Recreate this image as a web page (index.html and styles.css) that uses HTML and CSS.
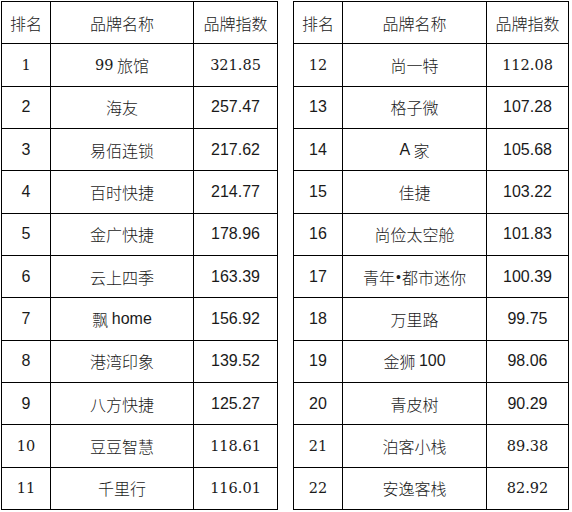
FILE: index.html
```html
<!DOCTYPE html>
<html lang="zh">
<head>
<meta charset="utf-8">
<link rel="stylesheet" href="styles.css">
</head>
<body>
<div class="page">
  <div class="tbl left">
    <div class="c h">排名</div><div class="c h">品牌名称</div><div class="c h">品牌指数</div>
    <div class="c s">1</div><div class="c"><span class="s">99</span> 旅馆</div><div class="c s">321.85</div>
    <div class="c n">2</div><div class="c">海友</div><div class="c n">257.47</div>
    <div class="c n">3</div><div class="c">易佰连锁</div><div class="c n">217.62</div>
    <div class="c n">4</div><div class="c">百时快捷</div><div class="c n">214.77</div>
    <div class="c n">5</div><div class="c">金广快捷</div><div class="c n">178.96</div>
    <div class="c n">6</div><div class="c">云上四季</div><div class="c n">163.39</div>
    <div class="c n">7</div><div class="c">飘 <span class="n">home</span></div><div class="c n">156.92</div>
    <div class="c n">8</div><div class="c">港湾印象</div><div class="c n">139.52</div>
    <div class="c n">9</div><div class="c">八方快捷</div><div class="c n">125.27</div>
    <div class="c s">10</div><div class="c">豆豆智慧</div><div class="c s">118.61</div>
    <div class="c s">11</div><div class="c">千里行</div><div class="c s">116.01</div>
  </div>
  <div class="tbl right">
    <div class="c h">排名</div><div class="c h">品牌名称</div><div class="c h">品牌指数</div>
    <div class="c s">12</div><div class="c">尚一特</div><div class="c s">112.08</div>
    <div class="c n">13</div><div class="c">格子微</div><div class="c n">107.28</div>
    <div class="c n">14</div><div class="c"><span class="n">A</span> 家</div><div class="c n">105.68</div>
    <div class="c n">15</div><div class="c">佳捷</div><div class="c n">103.22</div>
    <div class="c n">16</div><div class="c">尚俭太空舱</div><div class="c n">101.83</div>
    <div class="c n">17</div><div class="c">青年<span class="dot">•</span>都市迷你</div><div class="c n">100.39</div>
    <div class="c n">18</div><div class="c">万里路</div><div class="c n">99.75</div>
    <div class="c n">19</div><div class="c">金狮 <span class="n">100</span></div><div class="c n">98.06</div>
    <div class="c n">20</div><div class="c">青皮树</div><div class="c n">90.29</div>
    <div class="c s">21</div><div class="c">泊客小栈</div><div class="c s">89.38</div>
    <div class="c s">22</div><div class="c">安逸客栈</div><div class="c s">82.92</div>
  </div>
</div>
</body>
</html>
```
FILE: styles.css
```css
html, body {
  margin: 0;
  padding: 0;
  background: #fff;
}
.page {
  display: flex;
  gap: 15px;
  padding: 1px 0 0 1px;
  width: 572px;
  height: 512px;
  box-sizing: border-box;
}
.tbl {
  display: grid;
  grid-template-rows: repeat(12, 1fr);
  gap: 1px;
  background: #000;
  border: 1px solid #000;
  height: 509px;
  box-sizing: border-box;
}
.left {
  grid-template-columns: 48px 142px 83px;
}
.right {
  grid-template-columns: 48px 143px 81px;
}
.c {
  background: #fff;
  display: flex;
  align-items: center;
  justify-content: center;
  font-family: "Noto Sans CJK SC", sans-serif;
  font-size: 16px;
  font-weight: 300;
  color: #1a1a1a;
  white-space: pre;
}
.h {
  font-size: 16px;
}
.n {
  font-family: "Liberation Sans", "Noto Sans CJK SC", sans-serif;
  font-size: 16px;
  font-weight: 400;
}
.s {
  font-family: "DejaVu Serif", serif;
  font-size: 14.5px;
  font-weight: 400;
}
.dot {
  font-family: "Liberation Sans", sans-serif;
  font-size: 14px;
  padding: 0 1px;
}
```
